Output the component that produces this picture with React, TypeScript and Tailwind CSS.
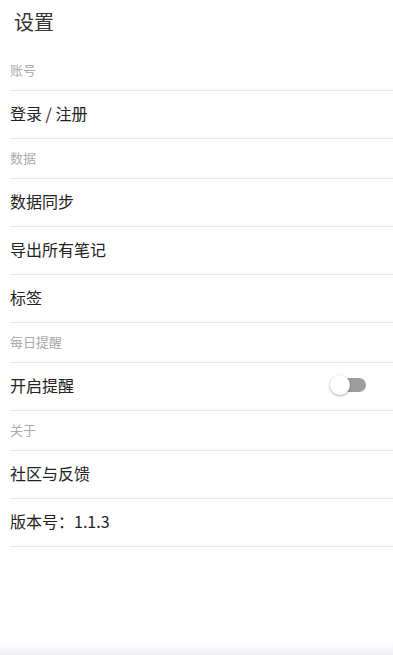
import React from 'react'

const font = { fontFamily: '"Noto Sans CJK SC", Roboto, sans-serif' }

type Row =
  | { kind: 'header'; label: string }
  | { kind: 'item'; label: string; toggle?: boolean }

const ROWS: Row[] = [
  { kind: 'header', label: '账号' },
  { kind: 'item', label: '登录 / 注册' },
  { kind: 'header', label: '数据' },
  { kind: 'item', label: '数据同步' },
  { kind: 'item', label: '导出所有笔记' },
  { kind: 'item', label: '标签' },
  { kind: 'header', label: '每日提醒' },
  { kind: 'item', label: '开启提醒', toggle: true },
  { kind: 'header', label: '关于' },
  { kind: 'item', label: '社区与反馈' },
  { kind: 'item', label: '版本号：1.1.3' },
]

function Toggle() {
  return (
    <div className="relative mr-[27px] flex h-5 w-9 items-center">
      <div className="ml-[10px] h-[14px] w-[26px] rounded-full bg-[#9e9e9e]" />
      <div className="absolute left-0 top-0 h-5 w-5 rounded-full bg-white shadow-[0_1px_3px_rgba(0,0,0,0.35)]" />
    </div>
  )
}

export default function App() {
  return (
    <div className="flex h-[655px] flex-col bg-white" style={font}>
      <div className="flex-1">
        <h1 className="flex h-[51px] items-center pl-[14px] pb-[7px] text-[20px] font-normal text-[#333]">设置</h1>
        <ul className="ml-[10px]">
          {ROWS.map((r, i) =>
            r.kind === 'header' ? (
              <li key={i} className="flex h-10 items-center border-b border-[#e6e6e6] pb-[2px] text-[13px] text-[#aaa]">
                {r.label}
              </li>
            ) : (
              <li key={i} className="flex h-12 items-center justify-between border-b border-[#e6e6e6] pb-[3px] text-[16px] text-[#222]">
                <span>{r.label}</span>
                {r.toggle && <Toggle />}
              </li>
            ),
          )}
        </ul>
      </div>
      <div className="h-3 bg-gradient-to-b from-white to-[#eff0f5]" />
    </div>
  )
}
